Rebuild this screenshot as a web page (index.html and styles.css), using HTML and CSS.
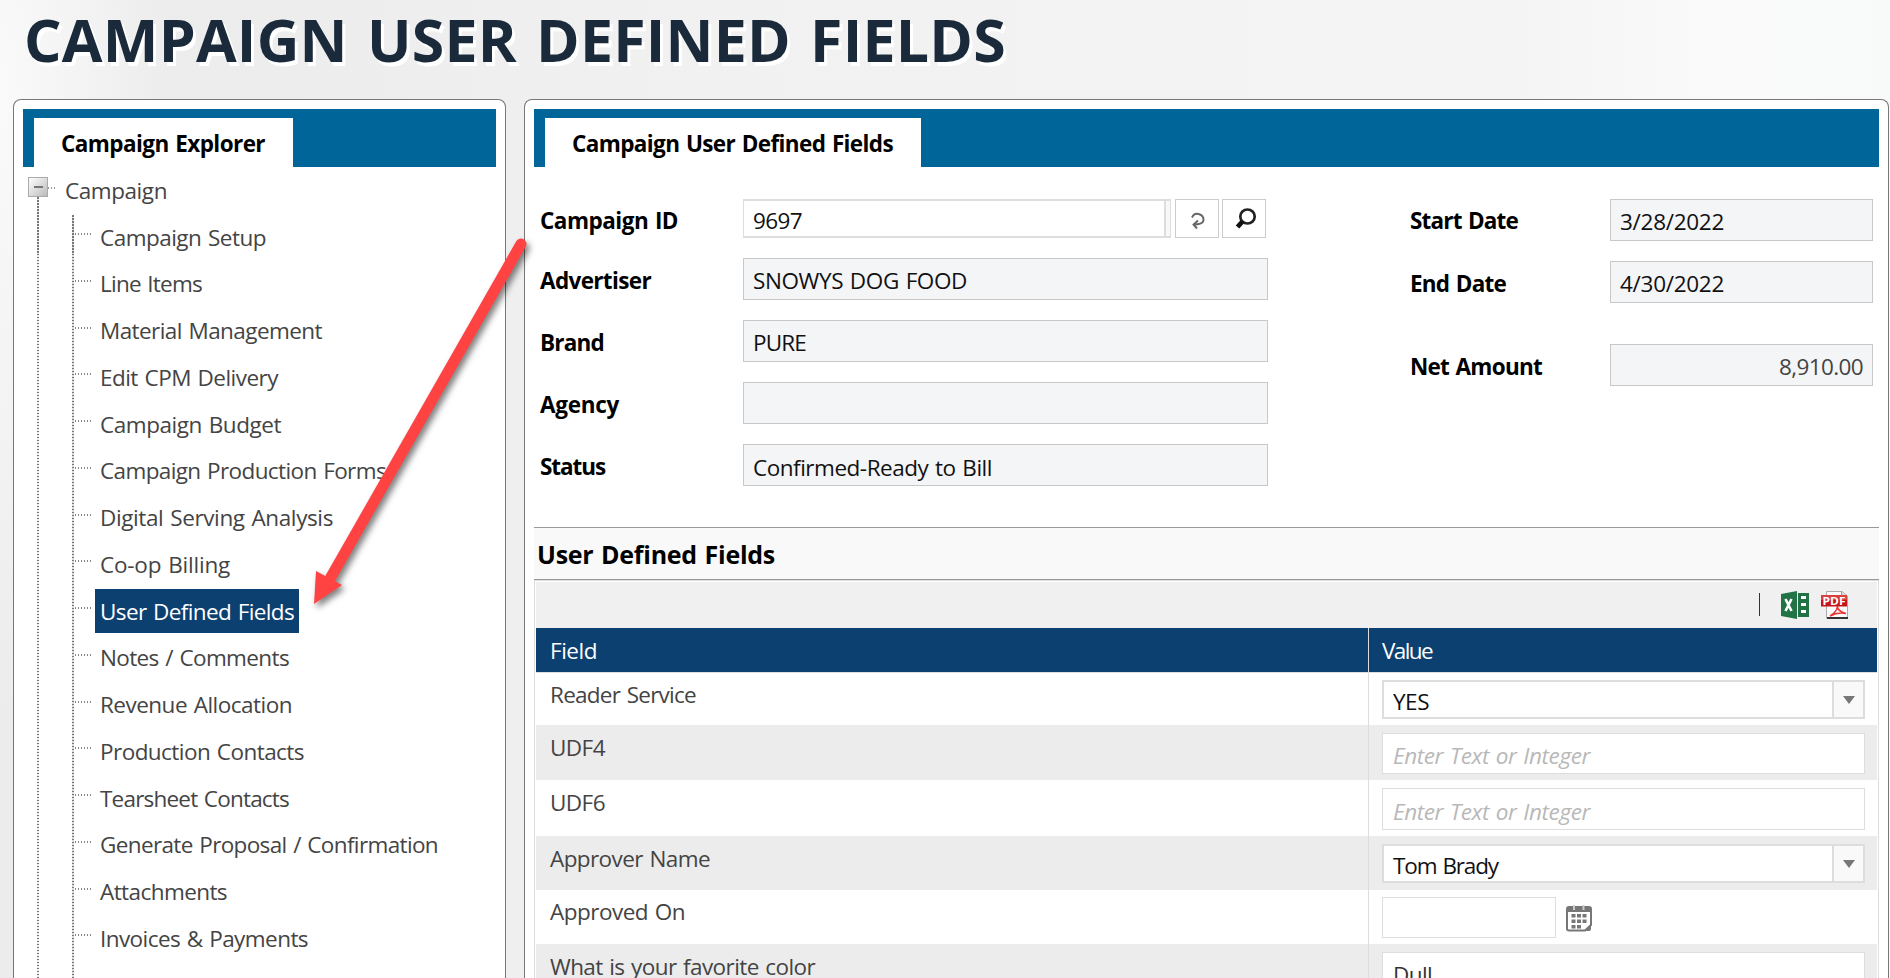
FILE: index.html
```
<!DOCTYPE html>
<html lang="en">
<head>
<meta charset="utf-8">
<title>Campaign User Defined Fields</title>
<link rel="stylesheet" href="styles.css">
</head>
<body>
<h1 class="title"><span class="t" data-w="982">CAMPAIGN USER DEFINED FIELDS</span></h1>
<main class="layout">
  <section class="panel explorer">
    <div class="tabbar"><div class="tab"><span class="t" data-w="204">Campaign Explorer</span></div></div>
    <div class="tree">
      <div class="root"><span class="toggle"></span><span class="root-dots"></span><span class="t root-label" data-w="102">Campaign</span></div>
      <ul class="nodes">
        <li><a class="t" data-w="166">Campaign Setup</a></li>
        <li><a class="t" data-w="102">Line Items</a></li>
        <li><a class="t" data-w="222">Material Management</a></li>
        <li><a class="t" data-w="178">Edit CPM Delivery</a></li>
        <li><a class="t" data-w="181">Campaign Budget</a></li>
        <li><a class="t" data-w="286">Campaign Production Forms</a></li>
        <li><a class="t" data-w="233">Digital Serving Analysis</a></li>
        <li><a class="t" data-w="130">Co-op Billing</a></li>
        <li><a class="t selected" data-w="194">User Defined Fields</a></li>
        <li><a class="t" data-w="189">Notes / Comments</a></li>
        <li><a class="t" data-w="192">Revenue Allocation</a></li>
        <li><a class="t" data-w="204">Production Contacts</a></li>
        <li><a class="t" data-w="189">Tearsheet Contacts</a></li>
        <li><a class="t" data-w="338">Generate Proposal / Confirmation</a></li>
        <li><a class="t" data-w="127">Attachments</a></li>
        <li><a class="t" data-w="208">Invoices &amp; Payments</a></li>
        <li><a class="t last">Revenue Schedule</a></li>
      </ul>
    </div>
  </section>
  <section class="panel content">
    <div class="tabbar"><div class="tab"><span class="t" data-w="321">Campaign User Defined Fields</span></div></div>
    <div class="form">
      <div class="fields">
        <div class="field id-field"><label class="t" data-w="138">Campaign ID</label>
          <div class="picker"><div class="picker-input"><span class="t" data-w="49">9697</span></div>
            <button class="icon-btn"><svg viewBox="0 0 42 37" width="42" height="37"><path d="M16 17.5Q18 13 22.500 14Q28 15.500 27.500 20.500Q26.500 24.500 18 24.500M22 20.500L17.500 24.500L21 28.500" fill="none" stroke="#666" stroke-width="1.900"/></svg></button>
            <button class="icon-btn"><svg viewBox="0 0 42 37" width="42" height="37"><ellipse cx="24.500" cy="16.500" rx="7.200" ry="7" fill="none" stroke="#222" stroke-width="2.700"/><path d="M19.500 21.500L14.500 27" stroke="#111" stroke-width="4.800"/></svg></button>
          </div></div>
        <div class="field"><label class="t" data-w="111">Advertiser</label><div class="readonly"><span class="t" data-w="214">SNOWYS DOG FOOD</span></div></div>
        <div class="field"><label class="t" data-w="64">Brand</label><div class="readonly"><span class="t" data-w="53">PURE</span></div></div>
        <div class="field"><label class="t" data-w="79">Agency</label><div class="readonly"></div></div>
        <div class="field status"><label class="t" data-w="65">Status</label><div class="readonly"><span class="t" data-w="239">Confirmed-Ready to Bill</span></div></div>
      </div>
      <div class="fields side">
        <div class="field"><label class="t" data-w="108">Start Date</label><div class="readonly"><span class="t" data-w="104">3/28/2022</span></div></div>
        <div class="field"><label class="t" data-w="96">End Date</label><div class="readonly"><span class="t" data-w="104">4/30/2022</span></div></div>
        <div class="field net"><label class="t" data-w="132">Net Amount</label><div class="readonly amount"><span class="t" data-w="84">8,910.00</span></div></div>
      </div>
    </div>
    <h2 class="section"><span class="t" data-w="238">User Defined Fields</span></h2>
    <div class="grid">
      <div class="toolbar">
        <span class="sep"></span>
        <svg class="xls" viewBox="0 0 28 28" width="28" height="28"><path d="M0 3L16 0V28L0 25Z" fill="#217346"/><path d="M17 2H28V26H17Z" fill="#217346"/><path d="M20 5h5v3h-5zM20 12h5v3h-5zM20 19h5v3h-5z" fill="#fff"/><path d="M4.500 8L10.500 20M10.500 8L4.500 20" stroke="#fff" stroke-width="2.600"/></svg>
        <svg class="pdf" viewBox="0 0 28 28" width="28" height="28"><path d="M5.500 .5H21L26.500 5V27H5.500Z" fill="#fafafa" stroke="#aaa"/><path d="M20.500 .5V5H26" fill="#ddd" stroke="#999"/><path d="M6 27H27" stroke="#333" stroke-width="2"/><path d="M0 4H26V15.500H0Z" fill="#c3161c"/><path d="M0 4H26V9H0Z" fill="#d94040"/><text x="1.500" y="13.700" textLength="23" lengthAdjust="spacingAndGlyphs" class="pdf-text">PDF</text><path d="M9 25Q16 21 16.500 15Q16 20 25 22.500Q17 20.500 9 25" fill="none" stroke="#e33" stroke-width="1.500"/></svg>
      </div>
      <div class="row head"><div class="cell"><span class="t" data-w="47">Field</span></div><div class="cell"><span class="t" data-w="50">Value</span></div></div>
      <div class="row r1"><div class="cell"><span class="t" data-w="146">Reader Service</span></div><div class="cell"><div class="select"><span class="t" data-w="36">YES</span><i class="drop"></i></div></div></div>
      <div class="row r2 alt"><div class="cell"><span class="t" data-w="55">UDF4</span></div><div class="cell"><div class="text-input hint"><span class="t" data-w="197">Enter Text or Integer</span></div></div></div>
      <div class="row r3"><div class="cell"><span class="t" data-w="55">UDF6</span></div><div class="cell"><div class="text-input tall hint"><span class="t" data-w="197">Enter Text or Integer</span></div></div></div>
      <div class="row r4 alt"><div class="cell"><span class="t" data-w="160">Approver Name</span></div><div class="cell"><div class="select"><span class="t" data-w="105">Tom Brady</span><i class="drop"></i></div></div></div>
      <div class="row r5"><div class="cell"><span class="t" data-w="135">Approved On</span></div><div class="cell"><div class="text-input date"></div>
        <svg class="cal" viewBox="0 0 26 28" width="26" height="28"><path d="M3 3H23Q25 3 25 5V21L19 26.500H3Q1 26.500 1 24.500V5Q1 3 3 3Z" fill="#fff" stroke="#777" stroke-width="2"/><path d="M1 3H25V8H1Z" fill="#777"/><path d="M18 27L25 20V25Q25 27 23 27Z" fill="#777"/><path d="M8 1V6M17.500 1V6" stroke="#ccc" stroke-width="2"/><path d="M5.500 10h4v3.500h-4zM11 10h4v3.500h-4zM16.500 10h4v3.500h-4zM5.500 15.500h4v3.500h-4zM11 15.500h4v3.500h-4zM16.500 15.500h4v3.500h-4zM5.500 21h4v3.500h-4zM11 21h4v3.500h-4z" fill="#777"/></svg></div></div>
      <div class="row r6 alt"><div class="cell"><span class="t" data-w="265">What is your favorite color</span></div><div class="cell"><div class="text-input"><span class="t" data-w="39">Dull</span></div></div></div>
    </div>
  </section>
</main>
<svg class="arrow" viewBox="0 0 240 390" width="240" height="390"><path d="M221 14L31 347" stroke="#ff4343" stroke-width="11" stroke-linecap="round"/><path d="M14 374L16 341L42 355Z" fill="#ff4343"/></svg>
<script src="fit.js"></script>
</body>
</html>
```
FILE: styles.css
```
* { box-sizing: border-box; }
body { margin: 0; width: 1890px; height: 978px; overflow: hidden; position: relative; font: 22.5px/30px "Open Sans", "Noto Sans", sans-serif; color: #444; background: radial-gradient(ellipse 170px 620px at 0 10%, #fafafa, rgba(250,250,250,0)), linear-gradient(90deg, #ececec 0, #ededed 300px, #f1f1f1 700px, #f4f4f4 1500px, #fafafa 1720px, #f8faf9 1890px); }
.t { white-space: nowrap; word-spacing: .06em; }
.title { margin: 0; height: 99px; padding-left: 24px; font-size: 59px; line-height: 79px; font-weight: 700; color: #1a2a3a; text-shadow: 3px 4px 0 #fff; }
.title .t { word-spacing: .06em; }
.layout { display: flex; gap: 18px; padding-left: 13px; height: 879px; }
.panel { background: #fff; border: 1px solid #777; border-bottom: 0; border-radius: 8px 8px 0 0; padding: 9px 9px 0; overflow: hidden; }
.explorer { width: 493px; }
.content { width: 1365px; }
.tabbar { background: #006699; height: 58px; padding: 9px 0 0 11px; display: flex; }
.tab { background: #fff; color: #000; font-weight: 700; padding: 11px 27px 0; height: 49px; }
.explorer .tab { width: 259px; }
.content .tab { width: 376px; }

.tree { padding: 10px 0 0 5px; background: repeating-linear-gradient(#777 0 1.5px, #eee 1.5px 3px) 14px 30px / 2px 900px no-repeat; height: 820px; }
.root { display: flex; height: 38px; }
.toggle { width: 20px; height: 20px; border: 1px solid #aaa; background: linear-gradient(#777, #777) center / 9px 2px no-repeat, linear-gradient(135deg, #fff, #bbb); }
.root-dots { width: 9px; height: 2px; margin-top: 10px; background: repeating-linear-gradient(90deg, #999 0 1.5px, #fff 1.5px 3px); }
.root-label { margin: -1px 0 0 8px; }
.nodes { list-style: none; margin: 0 0 0 44px; padding: 0; background: repeating-linear-gradient(#777 0 1.5px, #ddd 1.5px 3px) 0 0 / 2px 900px no-repeat; }
.nodes li { height: 46.75px; padding-left: 23px; display: flex; background: repeating-linear-gradient(90deg, #888 0 1.5px, #fff 1.5px 3px) 3px 18px / 16px 2px no-repeat; }
.nodes a { height: 44px; padding: 7.6px 5px 0; }
.nodes .selected { background: #0c4070; color: #fff; font-weight: 500; }
.nodes .last { padding-top: 7.8px; }

.form { display: flex; justify-content: space-between; height: 360px; padding: 32px 6px 0 6px; }
.fields { width: 728px; display: flex; flex-direction: column; gap: 20px; color: #111; }
.side { width: 463px; }
.field { display: flex; justify-content: space-between; height: 42px; }
.field label { font-weight: 700; color: #000; padding-top: 8px; }
.id-field label, .side .field:first-child label { padding-top: 7px; }
.readonly { width: 525px; border: 1px solid #c8c8c8; background: #f4f5f7; padding: 7px 9px 0; }
.status .readonly { padding-top: 8px; }
.side .readonly { width: 263px; }
.net { margin-top: 21px; }
.amount { text-align: right; color: #444; }
.id-field { height: 39px; }
.picker { width: 525px; display: flex; gap: 3px; }
.picker-input { width: 428px; margin-right: 1px; border: 2px solid #ddd; border-width: 2px 1px; padding: 5px 9px 0; background: linear-gradient(90deg, #ddd 2px, #f8f8f8 2px) right / 6px 100% no-repeat; }
.icon-btn { width: 44px; height: 39px; padding: 0; border: 1px solid #ccc; background: #fff; }
.icon-btn svg { display: block; }

.section { margin: 0; height: 53px; border: 1px solid #999; border-width: 1px 0; background: #f9f9f9; font-size: 25px; line-height: 53px; font-weight: 700; color: #000; padding-left: 3px; }
.grid { border: 1px solid #ddd; padding: 1px 1px 0; }
.toolbar { height: 46px; background: #f0f0f0; display: flex; justify-content: flex-end; padding: 9px 28px 0 0; }
.sep { width: 1px; height: 23px; margin: 2px 21px 0 0; background: #333; }
.xls { margin-right: 12px; }
.pdf-text { font: 700 11px "Open Sans", sans-serif; fill: #fff; }
.row { display: grid; grid-template-columns: 832px 1fr; }
.cell { padding: 8px 13px 0 14px; }
.cell + .cell { border-left: 1px solid #ddd; display: flex; padding: 7px 12px 0 13px; }
.head { height: 45px; background: #0c4070; color: #fff; font-weight: 500; border-bottom: 1px solid #ddd; }
.row.head .cell + .cell { padding-top: 8px; }
.r1 { height: 52px; } .r2 { height: 55px; } .r3 { height: 56px; } .r4 { height: 54px; } .r5 { height: 54px; } .r6 { height: 60px; }
.r1 .cell:first-child, .r5 .cell:first-child { padding-top: 7px; }
.alt { background: #ececec; }
.select { flex: 1; height: 39px; border: 2px solid #ddd; background: #fff; padding: 5px 0 0 9px; color: #111; display: flex; justify-content: space-between; }
.drop { width: 31px; height: 35px; margin-top: -5px; border-left: 2px solid #ddd; background: #f9f9f9; display: flex; justify-content: center; }
.drop::after { content: ""; margin-top: 14px; border: solid transparent; border-width: 8px 6.5px 0; border-top-color: #777; height: 0; }
.text-input { flex: 1; height: 41px; border: 1px solid #ddd; background: #fff; padding: 7px 10px 0; color: #333; }
.tall { height: 42px; padding-top: 8px; }
.hint { font-style: italic; color: #b8b8b8; }
.date { flex: none; width: 174px; }
.cal { margin: 7px 0 0 10px; }
.r2 .cell + .cell, .r3 .cell + .cell, .r4 .cell + .cell, .r6 .cell + .cell { padding-top: 8px; }
.arrow { position: absolute; left: 300px; top: 230px; filter: drop-shadow(3px 4px 3px rgba(0,0,0,.5)); }
```
FILE: fit.js
```
document.querySelectorAll('.t[data-w]').forEach(function (el) {
  var range = document.createRange();
  range.selectNodeContents(el);
  var width = range.getBoundingClientRect().width;
  el.style.letterSpacing = (Number(el.dataset.w) - width) / el.textContent.length + 'px';
});
```
